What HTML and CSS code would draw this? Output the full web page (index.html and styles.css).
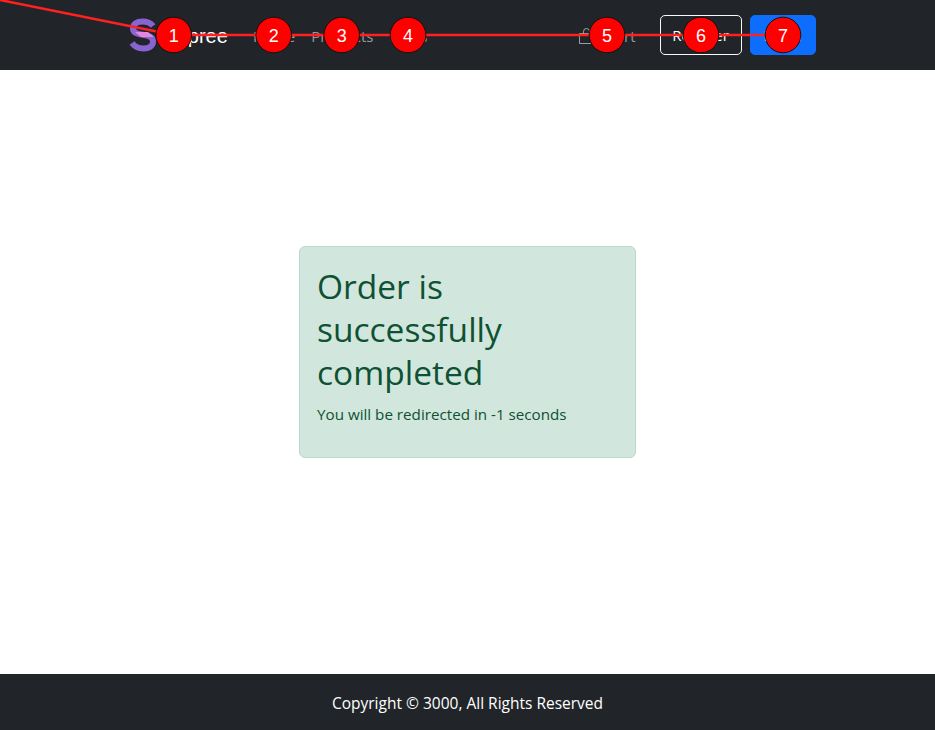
FILE: index.html

```html
<!DOCTYPE html>
<html>
  <head>
    <meta charset="utf-8">
    <title>Order complete</title>
    <link rel="stylesheet" href="styles.css">
  </head>
  <body>
    <nav class="navbar">
      <div class="nav-inner">
        <a class="brand" href="#">
          <svg class="brand-logo" width="28" height="34" viewBox="0 0 28 34">
            <path d="M24 8 C21 4 17 3.500 13.500 3.500 C8 3.500 4 6 4 10.500 C4 20 24 13.500 24 23.500 C24 28 20 30.500 14.500 30.500 C9.500 30.500 6 29 3 25" fill="none" stroke="#8a63d2" stroke-width="6"/>
            <path d="M6 14 L19 14 L25 19 L12 19 Z" fill="#e685e0"/>
          </svg>
          <span class="brand-name">Spree</span>
        </a>
        <ul class="nav-links">
          <li><a href="#">Home</a></li>
          <li><a href="#">Products</a></li>
          <li><a href="#">Blogs</a></li>
        </ul>
        <a class="cart" href="#">
          <svg width="15" height="16" viewBox="0 0 15 16" fill="none" stroke="currentColor">
            <path d="M.5 5.500h14v10H.5z"/>
            <path d="M4.500 5.500V3.500a3 3 0 0 1 6 0v2"/>
          </svg>
          <span>Cart</span>
        </a>
        <a class="btn btn-outline" href="#">Register</a>
        <a class="btn btn-primary" href="#">Login</a>
      </div>
    </nav>

    <main class="content">
      <div class="alert">
        <h1>Order is successfully completed</h1>
        <p>You will be redirected in -1 seconds</p>
      </div>
    </main>

    <footer class="footer">Copyright © 3000, All Rights Reserved</footer>

    <!-- numbered markers that sit over the page -->
    <svg class="markers" width="935" height="70" viewBox="0 0 935 70">
      <polyline points="0,0 174,35 783,35" fill="none" stroke="#ff2020" stroke-width="2.500"/>
      <g class="marker"><circle cx="173.700" cy="35" r="17.800"/><text x="173.700" y="41.500">1</text></g>
      <g class="marker"><circle cx="273.700" cy="35" r="17.800"/><text x="273.700" y="41.500">2</text></g>
      <g class="marker"><circle cx="341.700" cy="35" r="17.800"/><text x="341.700" y="41.500">3</text></g>
      <g class="marker"><circle cx="408" cy="35" r="17.800"/><text x="408" y="41.500">4</text></g>
      <g class="marker"><circle cx="607" cy="35" r="17.800"/><text x="607" y="41.500">5</text></g>
      <g class="marker"><circle cx="701" cy="35" r="17.800"/><text x="701" y="41.500">6</text></g>
      <g class="marker"><circle cx="783" cy="35" r="17.800"/><text x="783" y="41.500">7</text></g>
    </svg>
  </body>
</html>
```

FILE: styles.css

```css
* {
  box-sizing: border-box;
}

html, body {
  height: 100%;
}

body {
  margin: 0;
  display: flex;
  flex-direction: column;
  min-height: 730px;
  font-family: "Open Sans", "Noto Sans", sans-serif;
  font-size: 16px;
  line-height: 1.5;
  color: #212529;
  background-color: #fff;
}

a {
  text-decoration: none;
}

.navbar {
  height: 70px;
  flex: none;
  background-color: #212529;
}

.nav-inner {
  width: 720px;
  height: 100%;
  margin: 0 auto;
  padding: 0 12px 0 21px;
  display: flex;
  align-items: center;
}

.brand {
  display: flex;
  align-items: center;
  gap: 18px;
  margin-right: 25px;
  font-family: "Liberation Sans", sans-serif;
  font-size: 20px;
  color: #fff;
}

.brand-name {
  margin-top: 2px;
}

.nav-links {
  list-style: none;
  display: flex;
  gap: 16px;
  margin: 2px 0 0;
  padding: 0;
  flex: 1;
}

.nav-links a,
.cart {
  color: rgba(255, 255, 255, .55);
  font-size: 15px;
}

.cart {
  display: flex;
  align-items: center;
  gap: 12px;
  margin-top: 2px;
  margin-right: 24px;
}

.btn {
  display: block;
  height: 40px;
  padding: 8px 0 0;
  border: 1px solid transparent;
  border-radius: 5px;
  font-size: 15px;
  text-align: center;
  color: #fff;
}

.btn-outline {
  width: 82px;
  border-color: #f8f9fa;
}

.btn-primary {
  width: 66px;
  margin-left: 8px;
  background-color: #0d6efd;
  border-color: #0d6efd;
}

.content {
  flex: 1;
  display: flex;
  justify-content: center;
  align-items: center;
  padding-bottom: 40px;
}

.alert {
  width: 337px;
  height: 212px;
  padding: 18px 17px 17px;
  color: #0f5132;
  background-color: #d1e7dd;
  border: 1px solid #badbcc;
  border-radius: 6px;
}

.alert h1 {
  margin: 0 0 9px;
  font-size: 33.5px;
  font-weight: 400;
  line-height: 43px;
}

.alert p {
  margin: 0;
  font-size: 15.2px;
}

.footer {
  height: 56px;
  flex: none;
  display: flex;
  align-items: center;
  justify-content: center;
  padding-top: 4px;
  font-size: 15.5px;
  color: #fff;
  background-color: #212529;
}

.markers {
  position: absolute;
  top: 0;
  left: 0;
}

.marker circle {
  fill: #ff0000;
  stroke: #111;
  stroke-width: 1;
}

.marker text {
  fill: #fff;
  font-family: "Liberation Sans", sans-serif;
  font-size: 18px;
  text-anchor: middle;
}
```
